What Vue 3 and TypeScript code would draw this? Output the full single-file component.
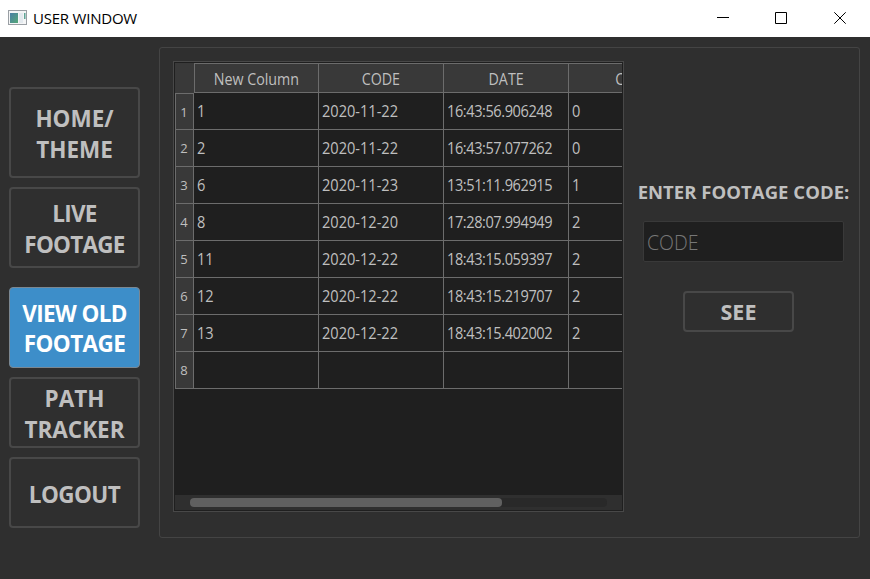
<script setup lang="ts">
interface NavItem {
  lines: string[]
  size: 'tall' | 'medium' | 'short'
  fit: 'wide' | 'snug' | 'tight'
  active?: boolean
  gapAfter?: boolean
}

const navItems: NavItem[] = [
  { lines: ['HOME/', 'THEME'], size: 'tall', fit: 'wide' },
  { lines: ['LIVE', 'FOOTAGE'], size: 'medium', fit: 'tight', gapAfter: true },
  { lines: ['VIEW OLD', 'FOOTAGE'], size: 'medium', fit: 'tight', active: true },
  { lines: ['PATH', 'TRACKER'], size: 'short', fit: 'wide' },
  { lines: ['LOGOUT'], size: 'short', fit: 'snug' },
]

const columns: string[] = ['New Column', 'CODE', 'DATE', 'CAM']

const rows: string[][] = [
  ['1', '2020-11-22', '16:43:56.906248', '0'],
  ['2', '2020-11-22', '16:43:57.077262', '0'],
  ['6', '2020-11-23', '13:51:11.962915', '1'],
  ['8', '2020-12-20', '17:28:07.994949', '2'],
  ['11', '2020-12-22', '18:43:15.059397', '2'],
  ['12', '2020-12-22', '18:43:15.219707', '2'],
  ['13', '2020-12-22', '18:43:15.402002', '2'],
  ['', '', '', ''],
]
</script>

<template>
  <div class="window">
    <header class="titlebar">
      <svg class="app-icon" width="19" height="16" viewBox="0 0 19 16">
        <defs>
          <linearGradient id="screen" x1="0" y1="0" x2="1" y2="1">
            <stop offset="0" stop-color="#4a7fa5" />
            <stop offset="1" stop-color="#55a878" />
          </linearGradient>
        </defs>
        <rect x="0.5" y="0.5" width="18" height="14" fill="#f4f5f6" stroke="#9a9fa4" />
        <rect x="2" y="3" width="8" height="10" fill="url(#screen)" />
        <rect x="11" y="3" width="4" height="10" fill="#e3e9ee" />
        <rect x="16" y="3" width="1.5" height="6" fill="#5fa596" />
      </svg>
      <span class="title">USER WINDOW</span>
      <div class="controls">
        <svg width="12" height="12" viewBox="0 0 12 12"><path d="M0 5.5H12" /></svg>
        <svg width="12" height="12" viewBox="0 0 12 12"><path d="M.5 .5H11.5V11.5H.5Z" /></svg>
        <svg class="close" width="12" height="12" viewBox="0 0 12 12"><path d="M.3 .3L11.7 11.7M11.7 .3L.3 11.7" /></svg>
      </div>
    </header>

    <div class="body">
      <nav class="nav">
        <button
          v-for="(item, i) in navItems"
          :key="i"
          class="nav-button"
          :class="[item.size, item.fit, { active: item.active, spaced: item.gapAfter }]"
        >
          <span v-for="line in item.lines" :key="line">{{ line }}</span>
        </button>
      </nav>

      <main class="panel">
        <section class="table-frame">
          <div class="grid-view">
            <div class="grid-row head-row">
              <div class="corner"></div>
              <div v-for="col in columns" :key="col" class="head-cell"><span>{{ col }}</span></div>
            </div>
            <div v-for="(row, r) in rows" :key="r" class="grid-row">
              <div class="row-number">{{ r + 1 }}</div>
              <div v-for="(cell, c) in row" :key="c" class="cell" :class="{ time: c === 2 }">
                <span>{{ cell }}</span>
              </div>
            </div>
          </div>
          <div class="scrollbar">
            <div class="track"><div class="thumb"></div></div>
          </div>
        </section>

        <section class="form">
          <label class="form-label" for="code">ENTER FOOTAGE CODE:</label>
          <input id="code" class="code-input" type="text" placeholder="CODE" />
          <button class="see-button">SEE</button>
        </section>
      </main>
    </div>
  </div>
</template>

<style>
body {
  margin: 0;
  overflow: hidden;
}
</style>

<style scoped>
* {
  box-sizing: border-box;
}
.window {
  display: flex;
  flex-direction: column;
  width: 870px;
  height: 579px;
  background: #2f2f2f;
  color: #bfbfbf;
  font-family: 'Open Sans', 'Noto Sans', sans-serif;
  overflow: hidden;
}
.titlebar {
  display: flex;
  align-items: center;
  height: 37px;
  flex: none;
  padding: 0 24px 0 8px;
  background: #fff;
  color: #000;
}
.app-icon {
  margin-top: -1px;
}
.title {
  margin-top: -2px;
  margin-left: 6px;
  font-size: 15px;
  line-height: 20px;
  letter-spacing: -0.22px;
  white-space: nowrap;
}
.controls {
  display: flex;
  gap: 46px;
  margin-left: auto;
  margin-top: -1px;
}
.controls svg {
  fill: none;
  stroke: #000;
  stroke-width: 1;
}
.controls .close {
  margin-left: 1px;
}
.body {
  display: flex;
  flex: 1;
  padding: 10px 10px 0 9px;
}
.nav {
  display: flex;
  flex-direction: column;
  gap: 9px;
  width: 131px;
  margin-right: 19px;
  padding-top: 40px;
}
button {
  margin: 0;
  padding: 0;
  border: 2px solid #484848;
  border-radius: 4px;
  background: #2f2f2f;
  color: #bfbfbf;
  font-family: inherit;
  font-weight: 700;
}
.nav-button {
  display: flex;
  flex: none;
  flex-direction: column;
  align-items: center;
  justify-content: center;
  padding-top: 3px;
  font-size: 22.5px;
  line-height: 31px;
  white-space: nowrap;
}
.tall {
  height: 91px;
}
.medium {
  height: 81px;
}
.short {
  height: 71px;
}
.wide {
  letter-spacing: 0;
}
.snug {
  letter-spacing: -0.6px;
}
.tight {
  letter-spacing: -0.75px;
}
.spaced {
  margin-bottom: 10px;
}
.active {
  border: 1px solid #7b8791;
  background: #3d8ec9;
  color: #fff;
  line-height: 30px;
  letter-spacing: -0.6px;
}
.panel {
  display: flex;
  width: 701px;
  height: 491px;
  padding: 13px 0 0 13px;
  border: 1px solid #444;
  border-radius: 3px;
}
.table-frame {
  display: flex;
  flex: none;
  flex-direction: column;
  justify-content: space-between;
  width: 451px;
  height: 451px;
  padding: 1px;
  border: 1px solid #484848;
  background: #1f1f1f;
}
.grid-view {
  width: 447px;
  overflow: hidden;
}
.grid-row {
  display: grid;
  grid-template-columns: 19px 125px 125px 125px 125px;
  height: 37px;
}
.head-row {
  height: 30px;
}
.corner {
  background: #393939;
}
.head-cell {
  display: flex;
  align-items: center;
  justify-content: center;
  padding-top: 1px;
  border: solid #6c6c6c;
  border-width: 1px 1px 1px 0;
  background: #393939;
  font-size: 15.5px;
  line-height: 20px;
}
.head-cell span {
  transform: scaleX(0.92);
}
.corner + .head-cell {
  border-left-width: 1px;
}
.row-number {
  display: flex;
  align-items: center;
  justify-content: center;
  padding-right: 1px;
  border: solid #6c6c6c;
  border-width: 0 1px 1px 1px;
  background: #393939;
  font-size: 13px;
}
.head-row + .grid-row .row-number {
  border-top-width: 1px;
}
.cell {
  display: flex;
  align-items: center;
  padding: 0 0 0 3px;
  border: solid #6c6c6c;
  border-width: 0 1px 1px 0;
  font-size: 15.5px;
}
.cell span {
  transform: scaleX(0.94);
  transform-origin: left center;
}
.cell.time {
  letter-spacing: -0.45px;
}
.scrollbar {
  height: 15px;
  padding: 3px 15px;
  background: #2f2f2f;
}
.track {
  height: 9px;
  border-radius: 4px;
  background: #292929;
}
.thumb {
  width: 312px;
  height: 9px;
  border-radius: 4px;
  background: #606060;
}
.form {
  display: flex;
  flex: 1;
  flex-direction: column;
  align-items: center;
  padding: 118px 0 0 4px;
}
.form-label {
  font-size: 18.5px;
  font-weight: 700;
  line-height: 26px;
  letter-spacing: 0.04px;
  white-space: nowrap;
}
.code-input {
  width: 201px;
  height: 41px;
  margin-top: 16px;
  padding: 2px 3px 0;
  border: 1px solid #393939;
  border-radius: 2px;
  background: #1f1f1f;
  color: #bfbfbf;
  font-family: 'Open Sans', sans-serif;
  font-size: 19.5px;
  font-weight: 300;
  outline: none;
}
.code-input::placeholder {
  color: #777;
  opacity: 1;
}
.see-button {
  width: 111px;
  height: 41px;
  margin-top: 29px;
  margin-right: 10px;
  padding-bottom: 1px;
  font-size: 21.5px;
}
</style>
